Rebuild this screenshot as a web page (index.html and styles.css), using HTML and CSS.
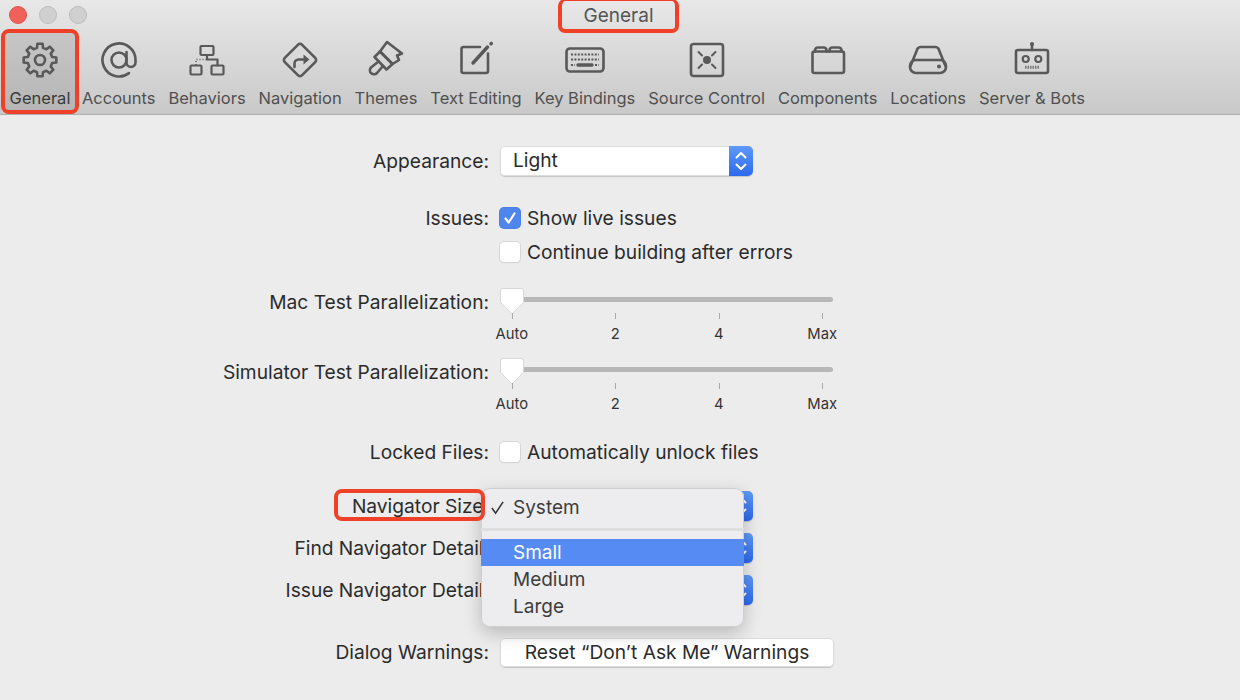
FILE: index.html
```html
<!DOCTYPE html>
<html lang="en">
<head>
<meta charset="utf-8">
<title>General</title>
<link rel="stylesheet" href="styles.css">
</head>
<body>
<header class="toolbar">
  <div class="titlebar">
    <div class="lights"><span class="light red"></span><span class="light"></span><span class="light"></span></div>
    <div class="title">General</div>
  </div>
  <nav class="tabs">
    <div class="tab active">
      <svg class="icon" viewBox="0 0 40 40"><path d="M16.98 7.87 17.42 3.7H22.58L23.02 7.87 26.44 9.29 29.7 6.65 33.35 10.3 30.71 13.56 32.13 16.98 36.3 17.42V22.58L32.13 23.02 30.71 26.44 33.35 29.7 29.7 33.35 26.44 30.71 23.02 32.13 22.58 36.3H17.42L16.98 32.13 13.56 30.71 10.3 33.35 6.65 29.7 9.29 26.44 7.87 23.02 3.7 22.58V17.42L7.87 16.98 9.29 13.56 6.65 10.3 10.3 6.65 13.56 9.29Z"/><circle cx="20" cy="20" r="5"/></svg>
      <span>General</span>
    </div>
    <div class="tab">
      <svg class="icon" viewBox="0 0 40 40"><circle cx="20" cy="20" r="7.5"/><path d="M27.5 12v10.5a4.5 4.5 0 0 0 9 0V20a16.5 16.5 0 1 0-6.5 13.1"/></svg>
      <span>Accounts</span>
    </div>
    <div class="tab">
      <svg class="icon thin" viewBox="0 0 40 40"><rect x="13.500" y="6" width="13" height="9" rx="1"/><rect x="3.500" y="25.500" width="11" height="9" rx="1"/><rect x="24.500" y="25.500" width="12" height="9" rx="1"/><path d="M20 15v4.500H30.500v6"/><path class="dots" d="M9 25v-5.500H20"/></svg>
      <span>Behaviors</span>
    </div>
    <div class="tab">
      <svg class="icon" viewBox="0 0 40 40"><rect x="7.750" y="7.750" width="24.500" height="24.500" rx="3" transform="rotate(45 20 20)"/><path d="M14.500 27v-3.500a4 4 0 0 1 4-4H25"/><path class="solid" d="M23.500 14.500 29.500 19.500 23.500 24.500Z"/></svg>
      <span>Navigation</span>
    </div>
    <div class="tab">
      <svg class="icon" viewBox="0 0 40 40"><path d="M21 2 36 13.500 31 15.500 33 20 26.500 24 14 11.500Z"/><path d="M14 11.500 8.500 17 20.500 29.500 26.500 24Z"/><path d="M12.500 21.500 5 27.500A4 4 0 1 0 11 33L17 26"/></svg>
      <span>Themes</span>
    </div>
    <div class="tab">
      <svg class="icon" viewBox="0 0 40 40"><path d="M24 7H7.500A2 2 0 0 0 5.500 9V31A2 2 0 0 0 7.500 33H30A2 2 0 0 0 32 31V13.500"/><path class="bold" d="M17 23 31.500 7"/><path class="bold" d="M35 3.800 35.400 3.400"/></svg>
      <span>Text Editing</span>
    </div>
    <div class="tab">
      <svg class="icon keyboard" viewBox="0 0 40 40"><rect x="1.500" y="8.500" width="37" height="23" rx="3.500"/><path class="keys" d="M6 14.500H34M6 19.500H34M6 25H10M30 25H34"/><path class="bold" d="M13 25H27"/></svg>
      <span>Key Bindings</span>
    </div>
    <div class="tab">
      <svg class="icon" viewBox="0 0 40 40"><rect x="4" y="4" width="32" height="32" rx="2.500"/><circle class="solid" cx="20" cy="20" r="4"/><path class="thinline" d="M11.500 12 15 15.500M28.500 12 25 15.500M11.500 28 15 24.500M28.500 28 25 24.500"/></svg>
      <span>Source Control</span>
    </div>
    <div class="tab">
      <svg class="icon" viewBox="0 0 40 40"><rect x="4.500" y="11.500" width="31.500" height="21.500" rx="2"/><path d="M7 11.500V10A3 3 0 0 1 10 7.500H15.500A3 3 0 0 1 18.500 10V11.500M21.500 11.500V10A3 3 0 0 1 24.500 7.500H30.500A3 3 0 0 1 33.500 10V11.500"/></svg>
      <span>Components</span>
    </div>
    <div class="tab">
      <svg class="icon" viewBox="0 0 40 40"><path d="M2.500 26 9 10A4 4 0 0 1 12.500 7H27.500A4 4 0 0 1 31 10L37.500 26"/><rect x="2" y="20" width="36" height="13" rx="6"/><circle class="solid" cx="31" cy="26.500" r="2"/></svg>
      <span>Locations</span>
    </div>
    <div class="tab">
      <svg class="icon" viewBox="0 0 40 40"><rect x="4" y="10" width="32" height="23" rx="2"/><path d="M20 10V4"/><circle class="solid" cx="20" cy="4" r="2"/><circle class="fine" cx="13.700" cy="19" r="3"/><circle class="fine" cx="26.300" cy="19" r="3"/><path class="dotrow" d="M13 27.300H27"/></svg>
      <span>Server &amp; Bots</span>
    </div>
  </nav>
</header>

<main class="prefs">
  <section class="row row-appearance">
    <div class="label">Appearance:</div>
    <div class="control">
      <div class="select"><span class="select-text">Light</span><span class="stepper"><svg viewBox="0 0 24 30"><path d="M7.500 11.500 12 7 16.500 11.500M7.500 18.500 12 23 16.500 18.500"/></svg></span></div>
    </div>
  </section>

  <section class="row row-issues">
    <div class="label">Issues:</div>
    <div class="control check-line"><span class="check on"><svg viewBox="0 0 20 20"><path d="M5.500 10.500 8.700 14.500 14.500 5.500"/></svg></span>Show live issues</div>
  </section>
  <section class="row row-continue">
    <div class="label"></div>
    <div class="control check-line"><span class="check"></span>Continue building after errors</div>
  </section>

  <section class="row row-slider-first">
    <div class="label">Mac Test Parallelization:</div>
    <div class="control slider">
      <div class="track"></div>
      <svg class="thumb" viewBox="0 0 26 30"><path d="M4 1.500H22A2.500 2.500 0 0 1 24.500 4V15.500L13 27 1.500 15.500V4A2.500 2.500 0 0 1 4 1.500Z"/></svg>
      <div class="ticks"><span class="tick">Auto</span><span class="tick">2</span><span class="tick">4</span><span class="tick">Max</span></div>
    </div>
  </section>
  <section class="row row-slider-second">
    <div class="label">Simulator Test Parallelization:</div>
    <div class="control slider">
      <div class="track"></div>
      <svg class="thumb" viewBox="0 0 26 30"><path d="M4 1.500H22A2.500 2.500 0 0 1 24.500 4V15.500L13 27 1.500 15.500V4A2.500 2.500 0 0 1 4 1.500Z"/></svg>
      <div class="ticks"><span class="tick">Auto</span><span class="tick">2</span><span class="tick">4</span><span class="tick">Max</span></div>
    </div>
  </section>

  <section class="row row-locked">
    <div class="label">Locked Files:</div>
    <div class="control check-line"><span class="check"></span>Automatically unlock files</div>
  </section>

  <section class="row row-nav">
    <div class="label">Navigator Size:</div>
    <div class="control"><div class="select"><span class="select-text"></span><span class="stepper"><svg viewBox="0 0 24 30"><path d="M7.500 11.500 12 7 16.500 11.500M7.500 18.500 12 23 16.500 18.500"/></svg></span></div></div>
  </section>
  <section class="row row-find">
    <div class="label">Find Navigator Detail:</div>
    <div class="control"><div class="select"><span class="select-text"></span><span class="stepper"><svg viewBox="0 0 24 30"><path d="M7.500 11.500 12 7 16.500 11.500M7.500 18.500 12 23 16.500 18.500"/></svg></span></div></div>
  </section>
  <section class="row row-issue-detail">
    <div class="label">Issue Navigator Detail:</div>
    <div class="control"><div class="select"><span class="select-text"></span><span class="stepper"><svg viewBox="0 0 24 30"><path d="M7.500 11.500 12 7 16.500 11.500M7.500 18.500 12 23 16.500 18.500"/></svg></span></div></div>
  </section>

  <section class="row row-dialog">
    <div class="label">Dialog Warnings:</div>
    <div class="control"><div class="button">Reset “Don’t Ask Me” Warnings</div></div>
  </section>
</main>

<div class="menu">
  <div class="menu-item first-item"><svg class="tickmark" viewBox="0 0 16 16"><path d="M2 8.500 6 14 14 2"/></svg>System</div>
  <div class="menu-sep"></div>
  <div class="menu-item selected">Small</div>
  <div class="menu-item">Medium</div>
  <div class="menu-item">Large</div>
</div>
<div class="callout"></div>
</body>
</html>
```

FILE: styles.css
```css
* { box-sizing: border-box; }
html, body { height: 100%; }
body {
  margin: 0;
  position: relative;
  overflow: hidden;
  background: #ececec;
  color: #2b2b2b;
  font-family: Inter, "Liberation Sans", sans-serif;
  font-size: 19.2px;
}

/* Toolbar */
.toolbar {
  height: 115px;
  background: linear-gradient(#e8e8e8, #c9c9c9);
  border-bottom: 1px solid #adadad;
}
.titlebar {
  display: grid;
  grid-template-columns: 558px 121px;
  height: 29px;
}
.lights { display: flex; gap: 12px; padding: 6px 0 0 9px; }
.light {
  width: 18px;
  height: 18px;
  border-radius: 50%;
  background: #d0d0d0;
  border: 1px solid #bcbcbc;
}
.light.red { background: #f0615a; border-color: #e4534d; }
.title {
  height: 34px;
  border: 4px solid #ee4127;
  border-top-width: 2px;
  border-radius: 7px;
  text-align: center;
  line-height: 30px;
  font-size: 19px;
  color: #555;
  margin-top: -1px;
}
.tabs {
  display: flex;
  gap: 12.9px;
  padding-left: 1px;
}
.tab {
  display: flex;
  flex-direction: column;
  align-items: center;
  height: 85px;
  padding-top: 11px;
  font-size: 16.5px;
  color: #505050;
  white-space: nowrap;
}
.tab span { margin-top: 8px; line-height: 20px; }
.tab.active {
  width: 78px;
  margin-right: -10px;
  border: 4px solid #ee4127;
  border-radius: 8px;
  padding-top: 7px;
  background: linear-gradient(#c6c6c6, #b6b6b6);
  color: #3a3a3a;
}
.icon {
  width: 40px;
  height: 40px;
  fill: none;
  stroke: #595959;
  stroke-width: 2.600;
  stroke-linejoin: round;
  stroke-linecap: round;
}
.icon .solid { fill: #595959; stroke: none; }
.icon.thin { stroke-width: 2.200; }
.icon .dots { stroke-dasharray: 1 2; stroke-width: 1.500; stroke-linecap: butt; }
.icon .bold { stroke-width: 3.400; }
.icon .keys { stroke-width: 2.200; stroke-dasharray: 2 1.400; stroke-linecap: butt; }
.icon .thinline { stroke-width: 2; }
.icon .fine { stroke-width: 2.200; }
.icon .dotrow { stroke-width: 3; stroke-dasharray: 1.500 1; stroke-linecap: butt; stroke: #777; }

/* Form rows */
.prefs { display: flex; flex-direction: column; }
.row {
  display: grid;
  grid-template-columns: 489px 1fr;
  column-gap: 11px;
  align-items: center;
}
.label { text-align: right; white-space: nowrap; }
.control { min-width: 0; }
.row-appearance { margin-top: 30px; height: 31px; }
.row-issues { margin-top: 30px; height: 24px; }
.row-continue { margin-top: 10px; height: 24px; }
.row-slider-first { margin-top: 25px; align-items: start; }
.row-slider-second { margin-top: 12px; align-items: start; }
.row-slider-first .label, .row-slider-second .label { line-height: 26px; }
.row-locked { margin-top: 23px; height: 24px; }
.row-nav { margin-top: 27px; height: 30px; }
.row-find { margin-top: 12px; height: 30px; }
.row-issue-detail { margin-top: 12px; height: 30px; }
.row-dialog { margin-top: 32px; height: 30px; }

/* Select */
.select {
  display: flex;
  width: 253px;
  height: 30px;
  background: #fff;
  border-radius: 5px;
  box-shadow: inset 0 0 0 1px #dcdcdc, 0 1px 1px #c4c4c4;
}
.select-text { flex: 1; padding-left: 13px; line-height: 29px; }
.stepper {
  display: block;
  width: 24px;
  border-radius: 0 5px 5px 0;
  background: linear-gradient(#5f99f7, #2c69ee);
}
.stepper svg {
  display: block;
  width: 24px;
  height: 30px;
  fill: none;
  stroke: #fff;
  stroke-width: 2;
  stroke-linecap: round;
  stroke-linejoin: round;
}

/* Checkbox */
.check-line { display: flex; align-items: center; gap: 7px; }
.check {
  flex: none;
  width: 20px;
  height: 20px;
  background: #fff;
  border-radius: 4px;
  box-shadow: 0 0 0 1px #d6d6d6, 0 1px 1px #c8c8c8;
}
.check.on { background: #4f86ee; box-shadow: 0 0 0 1px #4a80e6; }
.check svg {
  display: block;
  width: 20px;
  height: 20px;
  fill: none;
  stroke: #fff;
  stroke-width: 2.200;
  stroke-linecap: round;
  stroke-linejoin: round;
}

/* Sliders */
.slider { position: relative; height: 58px; width: 340px; }
.track {
  position: absolute;
  left: 0;
  top: 8px;
  width: 333px;
  height: 5px;
  border-radius: 3px;
  background: #b7b7b7;
}
.thumb {
  position: absolute;
  left: -1px;
  top: -2px;
  width: 26px;
  height: 30px;
  fill: #fff;
  stroke: #d8d8d8;
  stroke-width: 1;
}
.ticks {
  position: absolute;
  left: -40px;
  top: 24px;
  display: grid;
  grid-template-columns: repeat(4, 103.5px);
}
.tick {
  position: relative;
  padding-top: 12px;
  text-align: center;
  font-size: 14.8px;
  line-height: 18px;
  color: #333;
}
.tick::before {
  content: "";
  position: absolute;
  left: 50%;
  top: 0;
  width: 1px;
  height: 6px;
  background: #a8a8a8;
}

/* Button */
.button {
  width: 334px;
  height: 29px;
  background: #fff;
  border-radius: 5px;
  text-align: center;
  line-height: 29px;
  box-shadow: inset 0 0 0 1px #dcdcdc, 0 1px 1px #c4c4c4;
}

/* Pop-up menu */
.menu {
  position: absolute;
  left: 481px;
  top: 488px;
  width: 263px;
  height: 139px;
  background: #ededef;
  border-radius: 9px;
  box-shadow: inset 0 0 0 1px #cfcfcf, 0 6px 18px rgba(0, 0, 0, .22);
  font-size: 19px;
  color: #3d3d3d;
}
.menu-item {
  display: flex;
  align-items: center;
  height: 27px;
  padding-left: 32px;
  position: relative;
}
.first-item { margin-top: 6px; }
.tickmark {
  position: absolute;
  left: 9px;
  top: 6px;
  width: 15px;
  height: 15px;
  fill: none;
  stroke: #333;
  stroke-width: 1.600;
}
.menu-sep { height: 3px; margin: 7px 0 8px; background: #dfdfdf; }
.menu-item.selected { background: #558bf2; color: #fff; }
.callout {
  position: absolute;
  left: 334px;
  top: 489px;
  width: 151px;
  height: 32px;
  border: 4px solid #ee4127;
  border-radius: 8px;
}
```
